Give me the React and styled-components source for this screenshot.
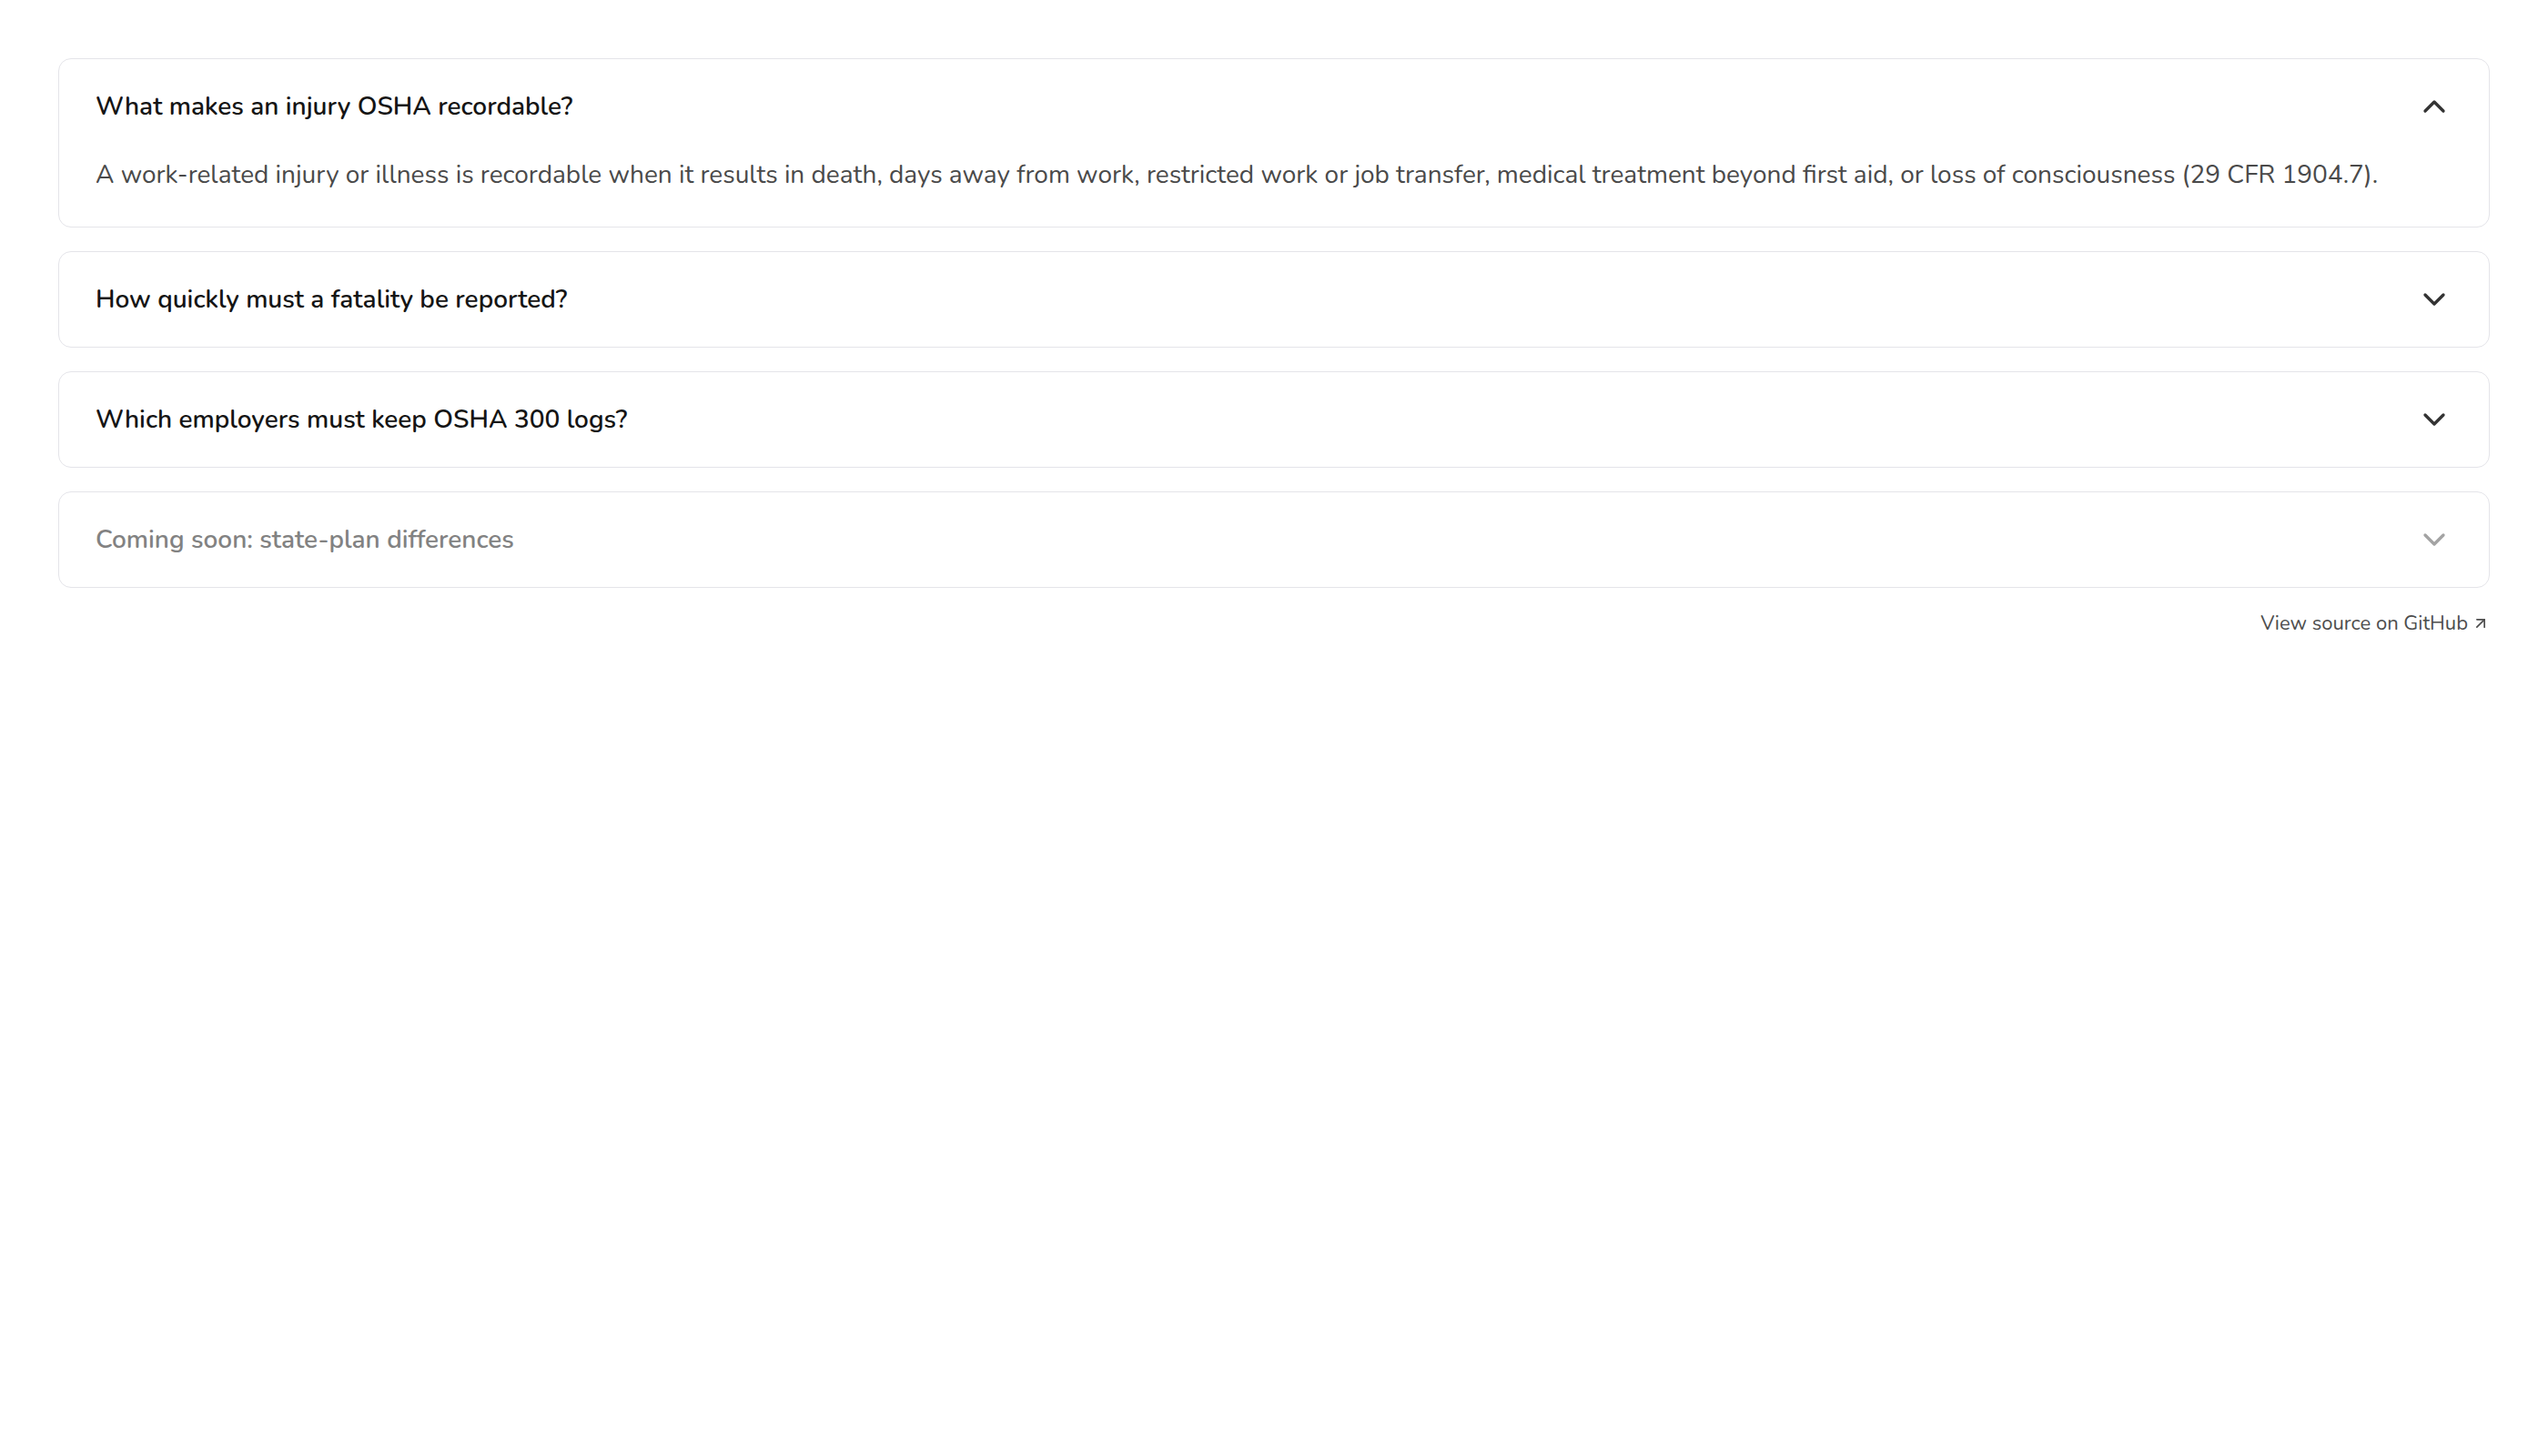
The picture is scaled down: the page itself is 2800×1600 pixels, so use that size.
import React, { useState } from "react";
import styled, { createGlobalStyle } from "styled-components";
import { ChevronDown, ChevronUp, ArrowUpRight } from "lucide-react";

const GlobalStyle = createGlobalStyle`
  html, body {
    margin: 0;
    padding: 0;
    background: #ffffff;
  }
  body {
    font-family: "Nunito", "Lato", "Noto Sans", sans-serif;
    -webkit-font-smoothing: antialiased;
  }
  * { box-sizing: border-box; }
`;

const Page = styled.main`
  padding: 64px;
  display: flex;
  flex-direction: column;
`;

const List = styled.div`
  display: flex;
  flex-direction: column;
  gap: 26px;
`;

const Item = styled.section`
  border: 1px solid #e4e4e9;
  border-radius: 14px;
  background: #ffffff;
`;

const Trigger = styled.button`
  all: unset;
  box-sizing: border-box;
  width: 100%;
  display: flex;
  align-items: center;
  justify-content: space-between;
  padding: 31px 40px;
  font-family: inherit;
  font-size: 28px;
  line-height: 42px;
  font-weight: 600;
  color: ${(p) => (p.$disabled ? "#828282" : "#151515")};
  cursor: ${(p) => (p.$disabled ? "not-allowed" : "pointer")};

  svg {
    flex: none;
    color: ${(p) => (p.$disabled ? "#a3a3a3" : "#333333")};
  }
`;

const Panel = styled.div`
  padding: 2px 40px 36px;
  font-size: 28px;
  line-height: 42px;
  color: #4a4a4a;
`;

const Footer = styled.div`
  display: flex;
  justify-content: flex-end;
  margin-top: 24px;
`;

const SourceLink = styled.a`
  display: inline-flex;
  align-items: center;
  gap: 4px;
  font-size: 22px;
  line-height: 30px;
  color: #4d4d4d;
  text-decoration: none;
`;

const faqs = [
  {
    q: "What makes an injury OSHA recordable?",
    a: "A work-related injury or illness is recordable when it results in death, days away from work, restricted work or job transfer, medical treatment beyond first aid, or loss of consciousness (29 CFR 1904.7).",
  },
  {
    q: "How quickly must a fatality be reported?",
    a: "Employers must report a work-related fatality to OSHA within 8 hours of learning about it.",
  },
  {
    q: "Which employers must keep OSHA 300 logs?",
    a: "Employers with more than 10 employees in non-exempt industries must keep OSHA 300 logs.",
  },
  {
    q: "Coming soon: state-plan differences",
    disabled: true,
  },
];

export default function App() {
  const [open, setOpen] = useState(0);

  return (
    <>
      <GlobalStyle />
      <Page>
        <List>
          {faqs.map((f, i) => {
            const isOpen = open === i;
            const Icon = isOpen ? ChevronUp : ChevronDown;
            return (
              <Item key={f.q}>
                <Trigger
                  type="button"
                  $disabled={f.disabled}
                  disabled={f.disabled}
                  aria-expanded={isOpen}
                  onClick={() => setOpen(isOpen ? -1 : i)}
                >
                  <span>{f.q}</span>
                  <Icon size={40} strokeWidth={2} />
                </Trigger>
                {isOpen && <Panel>{f.a}</Panel>}
              </Item>
            );
          })}
        </List>
        <Footer>
          <SourceLink href="#">
            View source on GitHub
            <ArrowUpRight size={20} strokeWidth={2} />
          </SourceLink>
        </Footer>
      </Page>
    </>
  );
}
